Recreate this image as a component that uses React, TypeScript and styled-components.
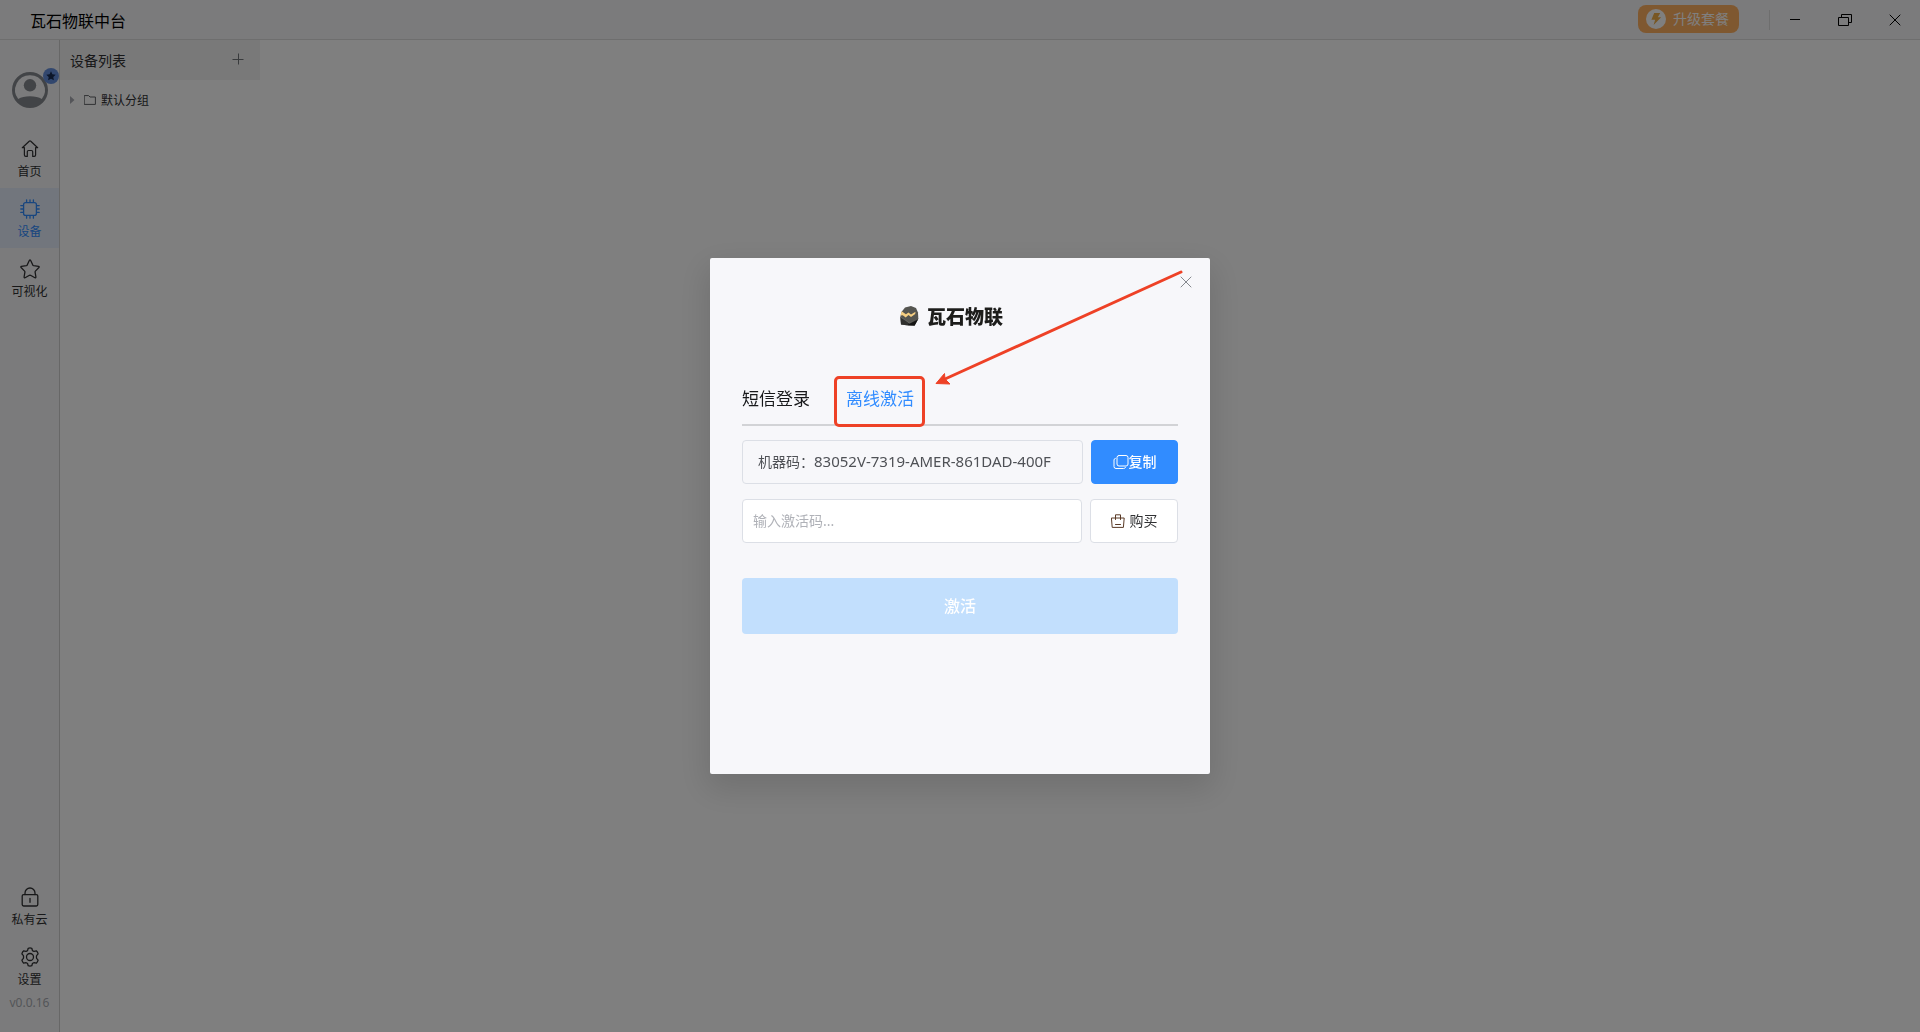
import React, { useState } from "react";
import styled, { createGlobalStyle, css } from "styled-components";

const GlobalStyle = createGlobalStyle`
  * { box-sizing: border-box; }
  html, body, #root { height: 100%; }
  body {
    margin: 0;
    color: #303133;
    background: #fff;
    font-family: "Noto Sans", "Noto Sans CJK SC", sans-serif;
    font-size: 14px;
    font-weight: 400;
  }
  button, input {
    font-family: inherit;
    font-weight: inherit;
  }
  button {
    margin: 0;
    padding: 0;
    border: 0;
    background: none;
    color: inherit;
    cursor: pointer;
  }
  svg { display: block; flex: none; }
`;

const Shell = styled.div`
  display: flex;
  flex-direction: column;
  min-height: 100vh;
`;

const TitleBar = styled.header`
  display: flex;
  align-items: center;
  height: 40px;
  padding-left: 30px;
  background: #f7f7f8;
  border-bottom: 1px solid #dcdcdc;
`;

const AppTitle = styled.h1`
  flex: 1;
  margin: 0;
  padding-top: 2px;
  font-size: 16px;
  font-weight: 400;
  line-height: 24px;
  color: #000;
`;

const UpgradeButton = styled.button`
  display: flex;
  align-items: center;
  gap: 7px;
  height: 28px;
  padding: 0 10px 0 8px;
  margin: 0 30px 2px 0;
  border-radius: 8px;
  background: #ffb061;
  color: #fff;
  font-size: 14px;
  line-height: 20px;
`;

const WindowControls = styled.div`
  display: flex;
  align-items: center;
  border-left: 1px solid #dcdcdc;
  height: 20px;
`;

const WindowButton = styled.button`
  display: grid;
  place-items: center;
  width: 50px;
  height: 38px;
  color: #000;
`;

const Body = styled.div`
  display: flex;
  flex: 1;
`;

const Sidebar = styled.nav`
  display: flex;
  flex-direction: column;
  width: 60px;
  padding: 32px 0 18px;
  background: #f7f7f8;
  border-right: 1px solid #cfcfcf;
`;

const Avatar = styled.button`
  position: relative;
  align-self: center;
  width: 36px;
  height: 36px;
  margin-bottom: 20px;
`;

const AvatarBadge = styled.span`
  position: absolute;
  top: -4px;
  right: -11px;
  display: grid;
  place-items: center;
  width: 16px;
  height: 16px;
  border-radius: 50%;
  background: #658fdc;
`;

const NavItem = styled.button<{ $active?: boolean }>`
  display: flex;
  flex-direction: column;
  align-items: center;
  gap: 5px;
  height: 60px;
  padding-top: 11px;
  font-size: 12px;
  line-height: 16px;
  color: ${(p) => (p.$active ? "#318cff" : "#303133")};
  background: ${(p) => (p.$active ? "#e4edfb" : "transparent")};
`;

const Spacer = styled.div`
  flex: 1;
`;

const Version = styled.small`
  text-align: center;
  font-size: 12px;
  line-height: 14px;
  padding-bottom: 4px;
  color: #a8abb2;
`;

const DevicePanel = styled.aside`
  width: 200px;
`;

const PanelHeader = styled.div`
  display: flex;
  align-items: center;
  justify-content: space-between;
  height: 40px;
  padding: 0 16px 0 10px;
  background: #f3f3f3;
`;

const PanelTitle = styled.h2`
  margin: 0;
  padding-top: 2px;
  font-size: 14px;
  font-weight: 400;
  line-height: 20px;
`;

const AddButton = styled.button`
  padding-bottom: 2px;
`;

const TreeItem = styled.button`
  display: flex;
  align-items: center;
  height: 40px;
  padding-left: 10px;
  font-size: 12px;
  line-height: 18px;
`;

const Caret = styled.span`
  width: 14px;
`;

const TreeLabel = styled.span`
  margin-left: 5px;
  padding-top: 2px;
`;

const Overlay = styled.div`
  position: fixed;
  inset: 0;
  display: flex;
  align-items: center;
  justify-content: center;
  background: rgba(0, 0, 0, 0.5);
`;

const Dialog = styled.section`
  position: relative;
  width: 500px;
  min-height: 516px;
  padding: 48px 32px 32px;
  border-radius: 2px;
  background: #f7f7fa;
  box-shadow: 0 12px 32px 4px rgba(0, 0, 0, 0.12);
`;

const CloseButton = styled.button`
  position: absolute;
  top: 14px;
  right: 14px;
  display: grid;
  place-items: center;
  width: 20px;
  height: 20px;
  color: #85888e;
`;

const Brand = styled.div`
  display: flex;
  align-items: center;
  justify-content: center;
  gap: 8px;
  height: 20px;
  padding-right: 17px;
`;

const BrandName = styled.span`
  font-family: "Noto Sans CJK SC", sans-serif;
  font-size: 19px;
  font-weight: 900;
  line-height: 20px;
  color: #1d1d1b;
`;

const Tabs = styled.div`
  display: flex;
  gap: 36px;
  height: 50px;
  margin-top: 50px;
  border-bottom: 2px solid #d2d3d6;
`;

const Tab = styled.button<{ $active?: boolean }>`
  position: relative;
  height: 46px;
  font-size: 17px;
  line-height: 24px;
  color: ${(p) => (p.$active ? "#318cff" : "#18191b")};
`;

const TabMark = styled.span`
  position: absolute;
  inset: 0 -11px -5px -12px;
  border: 3px solid #ee4126;
  border-radius: 5px;
`;

const Arrow = styled.svg`
  position: absolute;
  top: 10px;
  left: 222px;
  pointer-events: none;
`;

const Form = styled.form`
  display: flex;
  flex-direction: column;
  gap: 15px;
  padding-top: 14px;
`;

const FieldRow = styled.div`
  display: flex;
  gap: 8px;
`;

const field = css`
  flex: 1;
  min-width: 0;
  height: 44px;
  border: 1px solid #dcdfe6;
  border-radius: 4px;
  font-size: 14px;
`;

const MachineCode = styled.output`
  ${field}
  display: flex;
  align-items: center;
  padding: 0 15px 2px;
  color: #4f5156;
  white-space: nowrap;
`;

const Code = styled.span`
  font-size: 15px;
`;

const CodeInput = styled.input`
  ${field}
  padding: 0 10px 2px;
  background: #fff;
  color: #303133;
  outline: none;
  &::placeholder {
    color: #b0b2b8;
    opacity: 1;
  }
`;

const SideButton = styled.button<{ $primary?: boolean }>`
  display: flex;
  align-items: center;
  justify-content: center;
  gap: ${(p) => (p.$primary ? 0 : 5)}px;
  width: ${(p) => (p.$primary ? 87 : 88)}px;
  height: 44px;
  padding-bottom: 2px;
  border: 1px solid ${(p) => (p.$primary ? "#318cff" : "#dcdfe6")};
  border-radius: 4px;
  background: ${(p) => (p.$primary ? "#318cff" : "#fff")};
  color: ${(p) => (p.$primary ? "#fff" : "#303133")};
  font-size: 14px;
  font-weight: ${(p) => (p.$primary ? 500 : 400)};
  svg { margin-top: 2px; }
`;

const SubmitButton = styled.button`
  height: 56px;
  margin-top: 20px;
  padding-bottom: 2px;
  border-radius: 4px;
  background: #c2dffd;
  color: #fff;
  font-size: 16px;
  font-weight: 500;
`;

type IconProps = { size?: number };

const line = {
  fill: "none",
  stroke: "currentColor",
  strokeLinecap: "round" as const,
  strokeLinejoin: "round" as const,
};

const HomeIcon = () => (
  <svg width="20" height="20" viewBox="0 0 20 20" {...line} strokeWidth="1.2">
    <path d="M4.4 8.7H2.3L9.2 2.2q.8-.7 1.6 0l6.9 6.5h-2.1M4.4 8.7V16q0 1.4 1.4 1.4h1.5v-4.6q0-1.3 1.3-1.3h2.8q1.3 0 1.3 1.3v4.6h1.5q1.4 0 1.4-1.4V8.7" />
  </svg>
);

const ChipIcon = () => (
  <svg width="20" height="20" viewBox="0 0 20 20" {...line} strokeWidth="1.3">
    <rect x="3.6" y="3.6" width="12.8" height="12.8" rx="2" />
    <path d="M6.6 3.4V.8M10 3.4V.8M13.4 3.4V.8M6.6 19.2v-2.6M10 19.2v-2.6M13.4 19.2v-2.6M3.4 6.6H.8M3.4 10H.8M3.4 13.4H.8M19.2 6.6h-2.6M19.2 10h-2.6M19.2 13.4h-2.6" />
  </svg>
);

const StarIcon = () => (
  <svg width="20" height="20" viewBox="0 0 20 20" {...line} strokeWidth="1.3">
    <path d="M9.3 1.5q.7-1 1.4 0l2.1 4.6q.2.5.8.6l5 .7q1 .3.3 1.1l-3.5 3.6q-.4.4-.3 1l.8 4.9q0 1.1-1 .7l-4.4-2.4q-.5-.2-1 0l-4.4 2.4q-1 .4-1-.7l.8-4.9q.1-.6-.3-1L1.1 8.5q-.7-.8.3-1.1l5-.7q.6-.1.8-.6z" />
  </svg>
);

const LockIcon = () => (
  <svg width="20" height="20" viewBox="0 0 20 20" {...line} strokeWidth="1.3">
    <rect x="2.2" y="7.6" width="15.6" height="11.4" rx="1.4" />
    <path d="M5 7.6V6a5 5 0 0 1 10 0v1.600M10 11.300v4" />
  </svg>
);

const GearIcon = () => (
  <svg width="20" height="20" viewBox="0 0 20 20" {...line} strokeWidth="1.3">
    <path d="M8.200 1.300q1.800-.7 3.600 0l.6 2.100q.8.700 1.700.9l2.200-.5q1.400 1.300 1.800 3.100l-1.500 1.700q-.3 1.400 0 2.800l1.500 1.700q-.4 1.800-1.800 3.100l-2.200-.5q-.9.200-1.700.9l-.6 2.100q-1.800.7-3.600 0l-.6-2.100q-.8-.7-1.700-.9l-2.200.5q-1.400-1.300-1.800-3.100l1.500-1.700q.3-1.400 0-2.800L1.900 6.900q.4-1.800 1.800-3.100l2.200.5q.9-.2 1.700-.9z" />
    <circle cx="10" cy="10" r="3.5" />
  </svg>
);

const AvatarIcon = () => (
  <svg width="36" height="36" viewBox="0 0 36 36" fill="#85888e">
    <path
      fillRule="evenodd"
      d="M18 0a18 18 0 1 1 0 36 18 18 0 0 1 0-36zm0 3.200A14.800 14.800 0 0 0 6.200 27C9 25.200 13.200 24.200 18 24.200s9 1 11.800 2.800A14.800 14.800 0 0 0 18 3.200z"
    />
    <circle cx="18" cy="13.3" r="6.2" />
  </svg>
);

const BadgeStar = () => (
  <svg width="10" height="10" viewBox="0 0 10 10" fill="#182c52">
    <path d="M5 .3l1.400 3 3.300.4-2.400 2.300.6 3.300L5 7.700 2.100 9.300 2.700 6 .3 3.700l3.300-.4z" />
  </svg>
);

const BoltIcon = () => (
  <svg width="20" height="20" viewBox="0 0 20 20">
    <circle cx="10" cy="10" r="10" fill="#fff" />
    <path d="M8.200 4h6l-2.400 4.300h3.400L7.600 16l1.500-5.300H5.400z" fill="#f0ae48" />
  </svg>
);

const CrossIcon = ({ size = 12 }: IconProps) => (
  <svg width={size} height={size} viewBox="0 0 12 12" {...line}>
    <path d="M1 1l10 10M11 1L1 11" />
  </svg>
);

const RestoreIcon = () => (
  <svg width="14" height="12" viewBox="0 0 14 12" fill="none" stroke="currentColor">
    <path d="M.5 3.500h10v8H.5zM3.500 3.500v-3h10v8h-3" />
  </svg>
);

const MinimizeIcon = () => (
  <svg width="10" height="1" viewBox="0 0 10 1">
    <path d="M0 0h10v1H0z" fill="currentColor" />
  </svg>
);

const PlusIcon = () => (
  <svg width="12" height="12" viewBox="0 0 12 12" fill="none" stroke="#73767a">
    <path d="M.5 6.500h11M6.500.5v11" />
  </svg>
);

const CaretIcon = () => (
  <svg width="5" height="8" viewBox="0 0 5 8" fill="#a8abb2">
    <path d="M0 0l4.500 4L0 8z" />
  </svg>
);

const FolderIcon = () => (
  <svg width="12" height="10" viewBox="0 0 12 10" {...line} stroke="#606266">
    <path d="M.6.600h4l1.400 1.400h5.400v7.400H.6z" />
  </svg>
);

const CopyIcon = () => (
  <svg width="16" height="14" viewBox="0 0 16 14" {...line}>
    <rect x="4" y=".5" width="11" height="10.5" rx="2" />
    <path d="M2.300 3.400Q1 3.600 1 5v6.500q0 2 2 2h7.500q1.600 0 2-1" />
  </svg>
);

const BagIcon = () => (
  <svg width="14" height="14" viewBox="0 0 14 14" {...line} stroke="#5a3a26">
    <path d="M.8 4h12.400l-.8 9.400H1.600zM4.500 5.500V.8h5v4.700M4.500 10.500h5" />
  </svg>
);

const RockLogo = () => (
  <svg width="19" height="20" viewBox="0 0 19 20">
    <path d="M5 1.500L11 0l5 2 2 4.500.3 6-3.700 7-8-.2L1 18.500.3 11 1.500 6z" fill="#555550" />
    <path d="M.4 11l5 3.200 4.200 3 8.700-4.200-3.700 6.500-8-.2L1 18.500z" fill="#30302e" />
    <path d="M9.600 17.200l8.700-4.600-3.700 6.900-7-.2z" fill="#151514" />
    <path d="M.4 11l5.200 3.400 4 2.800 8.700-4.400" fill="none" stroke="#85857e" strokeWidth=".5" />
    <path d="M1.600 5.300l4.300 3 2.600-1.900 2.500 2 4.500-2.700-.3 2.200-4.200 3-2.500-2-2.800 2.500-3-2.200-2.100.2z" fill="#f6cf82" />
  </svg>
);

const mainNav = [
  { label: "首页", Icon: HomeIcon },
  { label: "设备", Icon: ChipIcon, active: true },
  { label: "可视化", Icon: StarIcon },
];

const footNav = [
  { label: "私有云", Icon: LockIcon },
  { label: "设置", Icon: GearIcon },
];

export default function App() {
  const [code, setCode] = useState("");

  return (
    <>
      <GlobalStyle />
      <Shell>
        <TitleBar>
          <AppTitle>瓦石物联中台</AppTitle>
          <UpgradeButton type="button">
            <BoltIcon />
            升级套餐
          </UpgradeButton>
          <WindowControls>
            <WindowButton type="button" aria-label="最小化"><MinimizeIcon /></WindowButton>
            <WindowButton type="button" aria-label="还原"><RestoreIcon /></WindowButton>
            <WindowButton type="button" aria-label="关闭窗口"><CrossIcon /></WindowButton>
          </WindowControls>
        </TitleBar>
        <Body>
          <Sidebar>
            <Avatar type="button" aria-label="账户">
              <AvatarIcon />
              <AvatarBadge><BadgeStar /></AvatarBadge>
            </Avatar>
            {mainNav.map(({ label, Icon, active }) => (
              <NavItem key={label} type="button" $active={active}>
                <Icon />
                {label}
              </NavItem>
            ))}
            <Spacer />
            {footNav.map(({ label, Icon }) => (
              <NavItem key={label} type="button">
                <Icon />
                {label}
              </NavItem>
            ))}
            <Version>v0.0.16</Version>
          </Sidebar>
          <DevicePanel>
            <PanelHeader>
              <PanelTitle>设备列表</PanelTitle>
              <AddButton type="button" aria-label="添加设备"><PlusIcon /></AddButton>
            </PanelHeader>
            <TreeItem type="button">
              <Caret><CaretIcon /></Caret>
              <FolderIcon />
              <TreeLabel>默认分组</TreeLabel>
            </TreeItem>
          </DevicePanel>
        </Body>
      </Shell>
      <Overlay>
        <Dialog role="dialog" aria-label="离线激活">
          <CloseButton type="button" aria-label="关闭"><CrossIcon /></CloseButton>
          <Brand>
            <RockLogo />
            <BrandName>瓦石物联</BrandName>
          </Brand>
          <Tabs role="tablist">
            <Tab type="button" role="tab" aria-selected={false}>短信登录</Tab>
            <Tab type="button" role="tab" aria-selected $active>
              离线激活
              <TabMark />
            </Tab>
          </Tabs>
          <Form onSubmit={(e) => e.preventDefault()}>
            <FieldRow>
              <MachineCode>
                机器码：<Code>83052V-7319-AMER-861DAD-400F</Code>
              </MachineCode>
              <SideButton type="button" $primary>
                <CopyIcon />
                复制
              </SideButton>
            </FieldRow>
            <FieldRow>
              <CodeInput
                aria-label="激活码"
                placeholder="输入激活码..."
                value={code}
                onChange={(e) => setCode(e.target.value)}
              />
              <SideButton type="button">
                <BagIcon />
                购买
              </SideButton>
            </FieldRow>
            <SubmitButton type="submit" disabled={!code}>激活</SubmitButton>
          </Form>
          <Arrow width="254" height="122" viewBox="0 0 254 122">
            <path d="M249 4L13 111" fill="none" stroke="#ee4126" strokeWidth="3" strokeLinecap="round" />
            <path d="M4 115.500l8.500-10 .5 5.500 5 5z" fill="#ee4126" stroke="#ee4126" strokeLinejoin="round" />
          </Arrow>
        </Dialog>
      </Overlay>
    </>
  );
}
